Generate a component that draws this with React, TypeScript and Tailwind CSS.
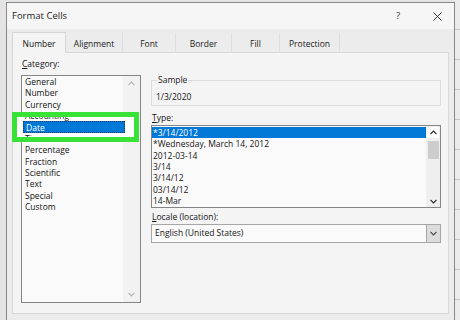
import React from "react";

const categories = ["General", "Number", "Currency", "Accounting", "Date", "Time", "Percentage", "Fraction", "Scientific", "Text", "Special", "Custom"];
const types = ["*3/14/2012", "*Wednesday, March 14, 2012", "2012-03-14", "3/14", "3/14/12", "03/14/12", "14-Mar"];
const tabs = [
  { label: "Number", w: "w-[54px]" },
  { label: "Alignment", w: "w-[57px]" },
  { label: "Font", w: "w-[53px]" },
  { label: "Border", w: "w-[56px]" },
  { label: "Fill", w: "w-[48px]" },
  { label: "Protection", w: "w-[60px]" },
];

function Chevron({ up, className }: { up?: boolean; className?: string }) {
  return (
    <svg width="7" height="5" viewBox="0 0 7 5" className={className}>
      <polyline points={up ? "0.5,4.2 3.5,1 6.5,4.2" : "0.5,0.8 3.5,4 6.5,0.8"} fill="none" stroke="currentColor" strokeWidth="1.1" />
    </svg>
  );
}

export default function App() {
  return (
    <div className="relative w-[460px] h-[320px] overflow-hidden bg-[#e4e4e4] font-['Open_Sans',sans-serif] text-[#141414]">
      <div className="flex h-full">
        <div className="w-[6px] shrink-0" />

        {/* Dialog */}
        <div className="mt-[2px] w-[449px] h-[330px] shrink-0 border border-[#888] bg-[#ececec] flex flex-col">
          {/* Title bar */}
          <div className="h-[26px] bg-[#f6f6f6] flex items-center pl-[5px]">
            <span className="text-[9.5px] text-[#222]">Format Cells</span>
            <span className="ml-auto w-[20px] text-center text-[9.5px] text-[#333]">?</span>
            <span className="ml-[19px] mr-[7px] w-[20px] flex justify-center">
              <svg width="9" height="9" viewBox="0 0 9 9">
                <path d="M0.5 0.5 L8.5 8.5 M8.5 0.5 L0.5 8.5" stroke="#333" strokeWidth="1" />
              </svg>
            </span>
          </div>

          {/* Tabs */}
          <div className="pt-[3px] pl-[5px] flex h-[23px] text-[8.5px]">
            {tabs.map((t, i) => (
              <div
                key={t.label}
                className={
                  i === 0
                    ? `${t.w} h-[21px] -mb-px flex items-center justify-center pt-[2px] bg-[#f4f4f4] border border-b-0 border-[#d6d6d6] relative z-10`
                    : `${t.w} h-[20px] mt-[1px] flex items-center justify-center pt-[2px] border-r border-[#dedede] text-[#222]`
                }
              >
                {t.label}
              </div>
            ))}
          </div>

          {/* Panel */}
          <div className="mx-[5px] h-[262px] bg-[#f4f4f4] border border-[#d8d8d8] flex pl-[8px] pr-[7px] pt-[4px] text-[8.5px]">
            {/* Category */}
            <div className="w-[120px] flex flex-col">
              <div className="h-[14px] leading-[14px] pl-[1px]">
                <span className="underline">C</span>ategory:
              </div>
              <div className="mt-[4px] h-[228px] border border-[#858585] bg-[#fafafa] flex">
                <div className="flex-1">
                  {categories.map((c) => (
                    <div
                      key={c}
                      className={`h-[11.36px] leading-[11.36px] pl-[3px] ${c === "Date" ? "bg-[#0078d7] text-white" : ""}`}
                    >
                      {c}
                    </div>
                  ))}
                </div>
                <div className="w-[17px] bg-[#f2f2f2] flex flex-col items-center justify-between pt-[5px] pb-[5px] text-[#b0b0b0]">
                  <Chevron up />
                  <Chevron />
                </div>
              </div>
            </div>

            {/* Right column */}
            <div className="ml-[10px] w-[290px] flex flex-col mt-[16px]">
              <fieldset className="border border-[#dcdcdc] px-[4px] pb-[1px]">
                <legend className="ml-[1px] px-[1px] leading-[14px] text-[#222]">Sample</legend>
                <div className="leading-[14px] pt-[3px]">1/3/2020</div>
              </fieldset>

              <div className="mt-[5px] h-[14px] leading-[14px] pl-[1px]">
                <span className="underline">T</span>ype:
              </div>
              <div className="h-[83px] border border-[#858585] bg-[#fafafa] flex">
                <div className="flex-1 pt-[1px]">
                  {types.map((t, i) => (
                    <div
                      key={t}
                      className={`h-[11.33px] leading-[11.33px] pl-[1px] ${i === 0 ? "bg-[#0078d7] text-white" : ""}`}
                    >
                      {t}
                    </div>
                  ))}
                </div>
                <div className="w-[14px] bg-[#efefef] flex flex-col items-center text-[#222]">
                  <div className="mt-[1px] w-[12px] h-[11px] bg-white flex items-center justify-center">
                    <Chevron up />
                  </div>
                  <div className="mt-[3px] w-[11px] h-[18px] bg-[#cdcdcd]" />
                  <div className="mt-auto mb-[3px]">
                    <Chevron />
                  </div>
                </div>
              </div>

              <div className="mt-[2px] h-[14px] leading-[14px] pl-[1px]">
                <span className="underline">L</span>ocale (location):
              </div>
              <div className="h-[19px] border border-[#a6a6a6] bg-[#fafafa] flex items-center">
                <div className="flex-1 pl-[3px]">English (United States)</div>
                <div className="w-[14px] h-full bg-[#dcdcdc] border-l border-[#a6a6a6] flex items-center justify-center text-[#444]">
                  <Chevron />
                </div>
              </div>
            </div>
          </div>
        </div>

        <div className="flex-1 bg-[#ebebeb] bg-[repeating-linear-gradient(to_bottom,transparent_0,transparent_29px,#c6c6c6_29px,#c6c6c6_30px)]" />
      </div>

      {/* Green highlight callout */}
      <div className="absolute left-[12px] top-[112px] w-[127px] h-[30px] border-[5px] border-[#39e236] bg-white overflow-hidden text-[8.5px]">
        <div className="mt-[-7.36px]">
          <div className="h-[11.36px] leading-[11.36px] pl-[8px]">Accounting</div>
          <div className="ml-[6px] w-[102px] h-[12px] leading-[11px] pl-[2px] bg-[#0078d7] text-white border border-dotted border-[#1b3b5c]">
            Date
          </div>
          <div className="h-[11.36px] leading-[11.36px] pl-[8px]">Time</div>
        </div>
      </div>
    </div>
  );
}
